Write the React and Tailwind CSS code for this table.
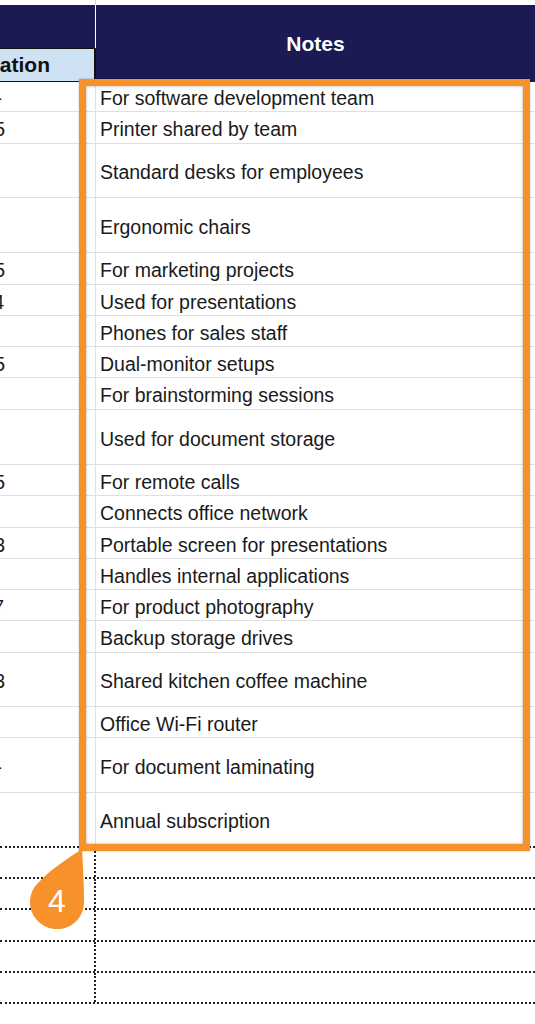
import React from "react";

const rows = [
  { t: "For software development team", h: "h-[30px]", d: "-", w: "w-[2px]" },
  { t: "Printer shared by team", h: "h-[32px]", d: "5", w: "w-[5px]" },
  { t: "Standard desks for employees", h: "h-[54px]" },
  { t: "Ergonomic chairs", h: "h-[55px]" },
  { t: "For marketing projects", h: "h-[32px]", d: "5", w: "w-[5px]" },
  { t: "Used for presentations", h: "h-[31px]", d: "4", w: "w-[4px]" },
  { t: "Phones for sales staff", h: "h-[31px]" },
  { t: "Dual-monitor setups", h: "h-[31px]", d: "5", w: "w-[5px]" },
  { t: "For brainstorming sessions", h: "h-[32px]" },
  { t: "Used for document storage", h: "h-[55px]" },
  { t: "For remote calls", h: "h-[31px]", d: "5", w: "w-[5px]" },
  { t: "Connects office network", h: "h-[32px]" },
  { t: "Portable screen for presentations", h: "h-[31px]", d: "3", w: "w-[5px]" },
  { t: "Handles internal applications", h: "h-[31px]" },
  { t: "For product photography", h: "h-[31px]", d: "7", w: "w-[4px]" },
  { t: "Backup storage drives", h: "h-[32px]" },
  { t: "Shared kitchen coffee machine", h: "h-[54px]", d: "3", w: "w-[5px]" },
  { t: "Office Wi-Fi router", h: "h-[31px]" },
  { t: "For document laminating", h: "h-[55px]", d: "-", w: "w-[2px]" },
  { t: "Annual subscription", h: "h-[55px]", last: true },
];

const emptyRows = ["h-[31px]", "h-[31px]", "h-[32px]", "h-[31px]", "h-[31px]"];

export default function App() {
  return (
    <div
      className="relative w-[535px] h-[1024px] overflow-hidden bg-white text-[#1a1a1a]"
      style={{ fontFamily: '"Liberation Sans", Arial, Helvetica, sans-serif' }}
    >
      {/* Header */}
      <div className="flex h-[82px]">
        <div className="w-[96px] shrink-0 flex flex-col">
          <div className="h-[5px] border-r border-[#d9d9d9]" />
          <div className="h-[43px] bg-[#1b1a52] border-r border-white" />
          <div className="h-[34px] bg-[#cfe2f3] border-t border-b border-r-2 border-[#111111] flex items-center">
            <div className="w-[50px] flex justify-end">
              <span className="whitespace-nowrap font-bold text-[21px] text-[#111111]">Location</span>
            </div>
          </div>
        </div>
        <div className="flex-1 flex flex-col">
          <div className="h-[5px]" />
          <div className="h-[78px] bg-[#1b1a52] flex items-center justify-center">
            <span className="font-bold text-[21px] text-white">Notes</span>
          </div>
        </div>
      </div>

      {/* Data rows */}
      <div className="flex flex-col">
        {rows.map((r, i) => (
          <div
            key={i}
            className={`flex ${r.h} ${r.last ? "border-b-2 border-dotted border-[#222222]" : "border-b border-[#e0e0e0]"}`}
          >
            <div className="w-[96px] shrink-0 border-r border-[#e0e0e0] flex items-center pt-[5px]">
              {r.d ? (
                <div className={`${r.w} flex justify-end`}>
                  <span className="whitespace-nowrap text-[19.5px]">{r.d}</span>
                </div>
              ) : null}
            </div>
            <div className="flex-1 flex items-center pl-[4px] pt-[5px]">
              <span className="whitespace-nowrap text-[19.5px]">{r.t}</span>
            </div>
          </div>
        ))}
        {emptyRows.map((h, i) => (
          <div key={i} className={`flex ${h} border-b-2 border-dotted border-[#222222]`}>
            <div className="w-[96px] shrink-0 border-r-2 border-dotted border-[#222222]" />
            <div className="flex-1" />
          </div>
        ))}
      </div>

      {/* Orange highlight box */}
      <div className="absolute left-[79px] top-[79px] w-[451px] h-[772px] border-[7px] border-[#f7922b] shadow-[inset_0_0_3px_rgba(0,0,0,0.35),0_0_2px_rgba(0,0,0,0.25)]" />

      {/* Callout marker */}
      <svg className="absolute left-[25px] top-[845px]" width="65" height="90" viewBox="0 0 65 90">
        <path
          d="M57 4 C58 20 59 40 59 57 A27 27 0 1 1 14 37 C26 24 42 14 57 4 Z"
          fill="#f7922b"
        />
        <text
          x="32"
          y="67"
          textAnchor="middle"
          fill="#ffffff"
          fontSize="32"
          fontFamily='"Liberation Sans", Arial, sans-serif'
        >
          4
        </text>
      </svg>
    </div>
  );
}
